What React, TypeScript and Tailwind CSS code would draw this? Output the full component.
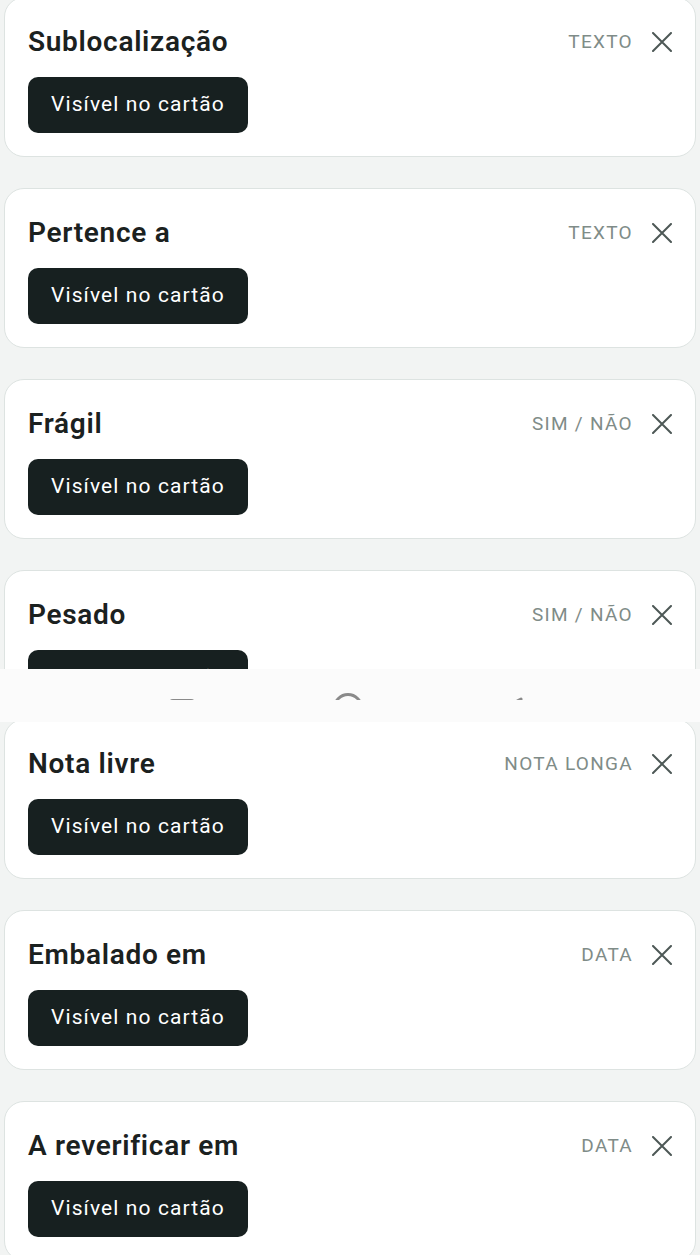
import React from "react";

type Field = { name: string; kind: string };

const top: Field[] = [
  { name: "Sublocalização", kind: "Texto" },
  { name: "Pertence a", kind: "Texto" },
  { name: "Frágil", kind: "Sim / Não" },
  { name: "Pesado", kind: "Sim / Não" },
];

const bottom: Field[] = [
  { name: "Nota livre", kind: "Nota longa" },
  { name: "Embalado em", kind: "Data" },
  { name: "A reverificar em", kind: "Data" },
];

function CloseIcon() {
  return (
    <svg width="20" height="20" viewBox="0 0 20 20" className="shrink-0">
      <path d="M1 1 L19 19 M19 1 L1 19" stroke="#4d5856" strokeWidth="2" strokeLinecap="round" />
    </svg>
  );
}

function FieldCard({ field, first }: { field: Field; first?: boolean }) {
  return (
    <div
      className={`h-[160px] shrink-0 rounded-[20px] border border-[#dde3e1] bg-white pl-[23px] pr-[23px] pt-[27px] ${
        first ? "-mt-[3px]" : ""
      }`}
    >
      <div className="flex h-[32px] items-center">
        <h3 className="mt-[2px] flex-1 text-[28px] font-semibold leading-[32px] tracking-[0.7px] text-[#1b2120]">
          {field.name}
        </h3>
        <span className="mt-[2px] text-[19px] uppercase leading-[32px] tracking-[1.3px] text-[#7f8c88]">
          {field.kind}
        </span>
        <div className="ml-[19px] mt-[2px]">
          <CloseIcon />
        </div>
      </div>
      <button className="mt-[20px] flex h-[56px] items-center rounded-[10px] bg-[#172020] px-[23px] text-[21px] tracking-[1.1px] text-white">
        Visível no cartão
      </button>
    </div>
  );
}

export default function App() {
  return (
    <div
      className="h-[1255px] w-[700px] overflow-hidden bg-[#f2f4f3]"
      style={{ fontFamily: "Roboto, 'Noto Sans', sans-serif" }}
    >
      <div className="flex h-[669px] flex-col gap-[31px] overflow-hidden px-[4px]">
        {top.map((f, i) => (
          <FieldCard key={f.name} field={f} first={i === 0} />
        ))}
      </div>

      <div className="h-[53px] bg-[#fbfbfb]">
        <div className="flex h-[31px] items-start overflow-hidden pl-[169px]">
          <div className="mt-[30px] h-[26px] w-[26px] rounded-[4px] border-[3px] border-[#8a8a8a]" />
          <div className="ml-[138px] mt-[24px] h-[30px] w-[30px] rounded-full border-[3px] border-[#8a8a8a]" />
          <svg width="28" height="28" viewBox="0 0 28 28" className="ml-[133px] mt-[28px]">
            <path d="M25 2 L25 26 L3 14 Z" fill="none" stroke="#8a8a8a" strokeWidth="3" strokeLinejoin="round" />
          </svg>
        </div>
      </div>

      <div className="flex flex-col gap-[31px] overflow-hidden px-[4px]">
        {bottom.map((f, i) => (
          <FieldCard key={f.name} field={f} first={i === 0} />
        ))}
      </div>
    </div>
  );
}
